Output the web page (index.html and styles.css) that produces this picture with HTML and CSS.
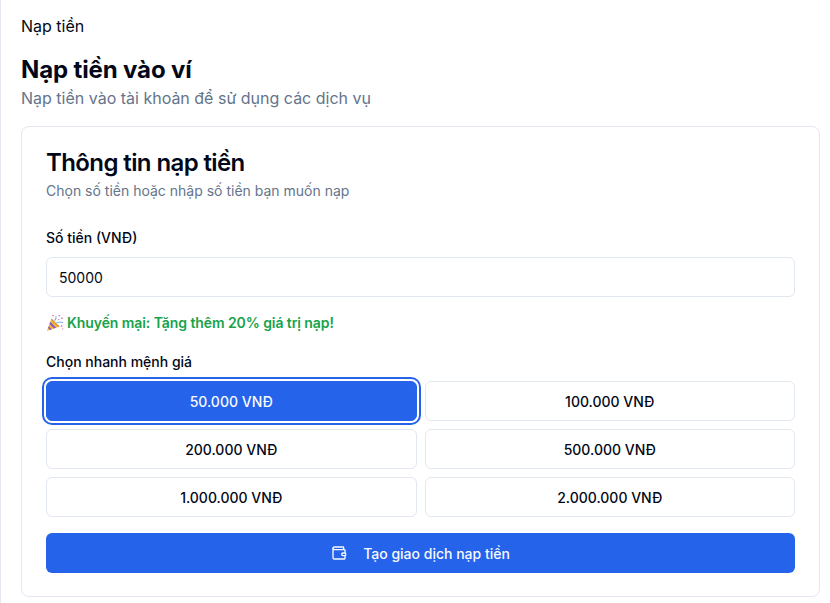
FILE: index.html
```html
<!DOCTYPE html>
<html lang="vi">
<head>
  <meta charset="UTF-8">
  <title>Nạp tiền</title>
  <link rel="stylesheet" href="styles.css">
</head>
<body>
  <main class="main">
    <p class="crumb">Nạp tiền</p>
    <h1 class="page-title">Nạp tiền vào ví</h1>
    <p class="page-sub">Nạp tiền vào tài khoản để sử dụng các dịch vụ</p>

    <section class="card">
      <h2 class="card-title">Thông tin nạp tiền</h2>
      <p class="card-sub">Chọn số tiền hoặc nhập số tiền bạn muốn nạp</p>

      <label class="label" for="amount">Số tiền (VNĐ)</label>
      <input class="input" id="amount" type="text" value="50000">

      <p class="promo">
        <svg class="promo-icon" viewBox="0 0 20 20" aria-hidden="true">
          <path d="M1 19 6 5 15 14Z" fill="#f5b93a"/>
          <path d="M4.800 8.600 11.400 15.200 8.800 16.200 3.800 11.200Z" fill="#8d5cc4"/>
          <path d="M3 13.500 6.500 17 4.600 17.800 2.300 15.500Z" fill="#8d5cc4"/>
          <path d="M6 5 15 14 13.800 14.600 5.600 6.200Z" fill="#d9952a"/>
          <path d="M9.500 7.500C11 6 11.800 4.500 11 2M11.500 10C14 8.500 16.500 8.500 19 9.800" fill="none" stroke="#7fb2e8" stroke-width="1.200"/>
          <path d="M7 1h1.600v1.600H7zM14 1h1.600v1.600H14zM17 4h1.600v1.600H17zM13.500 5.500h1.300v1.300h-1.300zM16.500 12.500h1.600v1.600h-1.600zM18 16h1.300v1.300H18z" fill="#e0709a"/>
        </svg>
        <span>Khuyến mại: Tặng thêm 20% giá trị nạp!</span>
      </p>

      <p class="label quick-label">Chọn nhanh mệnh giá</p>
      <div class="amounts">
        <button class="amount amount-active" type="button">50.000 VNĐ</button>
        <button class="amount" type="button">100.000 VNĐ</button>
        <button class="amount" type="button">200.000 VNĐ</button>
        <button class="amount" type="button">500.000 VNĐ</button>
        <button class="amount" type="button">1.000.000 VNĐ</button>
        <button class="amount" type="button">2.000.000 VNĐ</button>
      </div>

      <button class="submit" type="button">
        <svg class="submit-icon" viewBox="0 0 24 24" aria-hidden="true">
          <path d="M19 7V4a1 1 0 0 0-1-1H5a2 2 0 0 0 0 4h15a1 1 0 0 1 1 1v4h-3a2 2 0 0 0 0 4h3a1 1 0 0 0 1-1v-2a1 1 0 0 0-1-1"/>
          <path d="M3 5v14a2 2 0 0 0 2 2h15a1 1 0 0 0 1-1v-4"/>
        </svg>
        <span>Tạo giao dịch nạp tiền</span>
      </button>
    </section>
  </main>
</body>
</html>
```
FILE: styles.css
```css
* {
  box-sizing: border-box;
}
body {
  margin: 0;
  background: #fff;
  color: #020817;
  font-family: Inter, "Liberation Sans", sans-serif;
}
.main {
  height: 603px;
  overflow: hidden;
  padding: 16px 10px 0 20px;
  border-left: 1px solid #e4e6f3;
}
.crumb {
  margin: 0;
  font-size: 16px;
  line-height: 20px;
}
.page-title {
  margin: 18px 0 0;
  font-size: 24px;
  line-height: 32px;
  font-weight: 700;
  letter-spacing: -0.13px;
}
.page-sub {
  margin: 0;
  font-size: 16px;
  line-height: 24px;
  color: #64748b;
}
.card {
  margin-top: 16px;
  padding: 24px 24px 23px;
  border: 1px solid #e4e6f3;
  border-radius: 8px;
}
.card-title {
  margin: 0;
  font-size: 24px;
  line-height: 24px;
  font-weight: 600;
  letter-spacing: -0.6px;
}
.card-sub {
  margin: 6px 0 0;
  font-size: 14px;
  line-height: 20px;
  color: #64748b;
}
.label {
  display: block;
  margin: 27px 0 0;
  font-size: 14px;
  line-height: 20px;
  font-weight: 500;
}
.input {
  display: block;
  width: 100%;
  height: 40px;
  margin-top: 9px;
  padding: 0 12px;
  border: 1px solid #e2e8f0;
  border-radius: 6px;
  font: inherit;
  font-size: 14px;
  color: inherit;
}
.promo {
  display: flex;
  align-items: center;
  gap: 3px;
  margin: 16px 0 0;
  font-size: 14px;
  line-height: 20px;
  font-weight: 600;
  letter-spacing: -0.08px;
  color: #16a34a;
}
.promo-icon {
  width: 18px;
  height: 18px;
}
.quick-label {
  margin-top: 19px;
}
.amounts {
  display: grid;
  grid-template-columns: 1fr 1fr;
  gap: 8px;
  margin-top: 9px;
}
.amount {
  height: 40px;
  border: 1px solid #e2e8f0;
  border-radius: 6px;
  background: #fff;
  font: inherit;
  font-size: 14px;
  font-weight: 500;
  color: inherit;
}
.amount-active {
  border-color: #2563eb;
  background: #2563eb;
  color: #f8fafc;
  box-shadow: 0 0 0 2px #fff, 0 0 0 4px #2563eb;
}
.submit {
  display: flex;
  align-items: center;
  justify-content: center;
  gap: 16px;
  width: 100%;
  height: 40px;
  margin-top: 16px;
  border: 0;
  border-radius: 6px;
  background: #2563eb;
  font: inherit;
  font-size: 14px;
  font-weight: 500;
  color: #f8fafc;
}
.submit-icon {
  width: 16px;
  height: 16px;
  fill: none;
  stroke: currentColor;
  stroke-width: 2;
  stroke-linecap: round;
  stroke-linejoin: round;
}
```
